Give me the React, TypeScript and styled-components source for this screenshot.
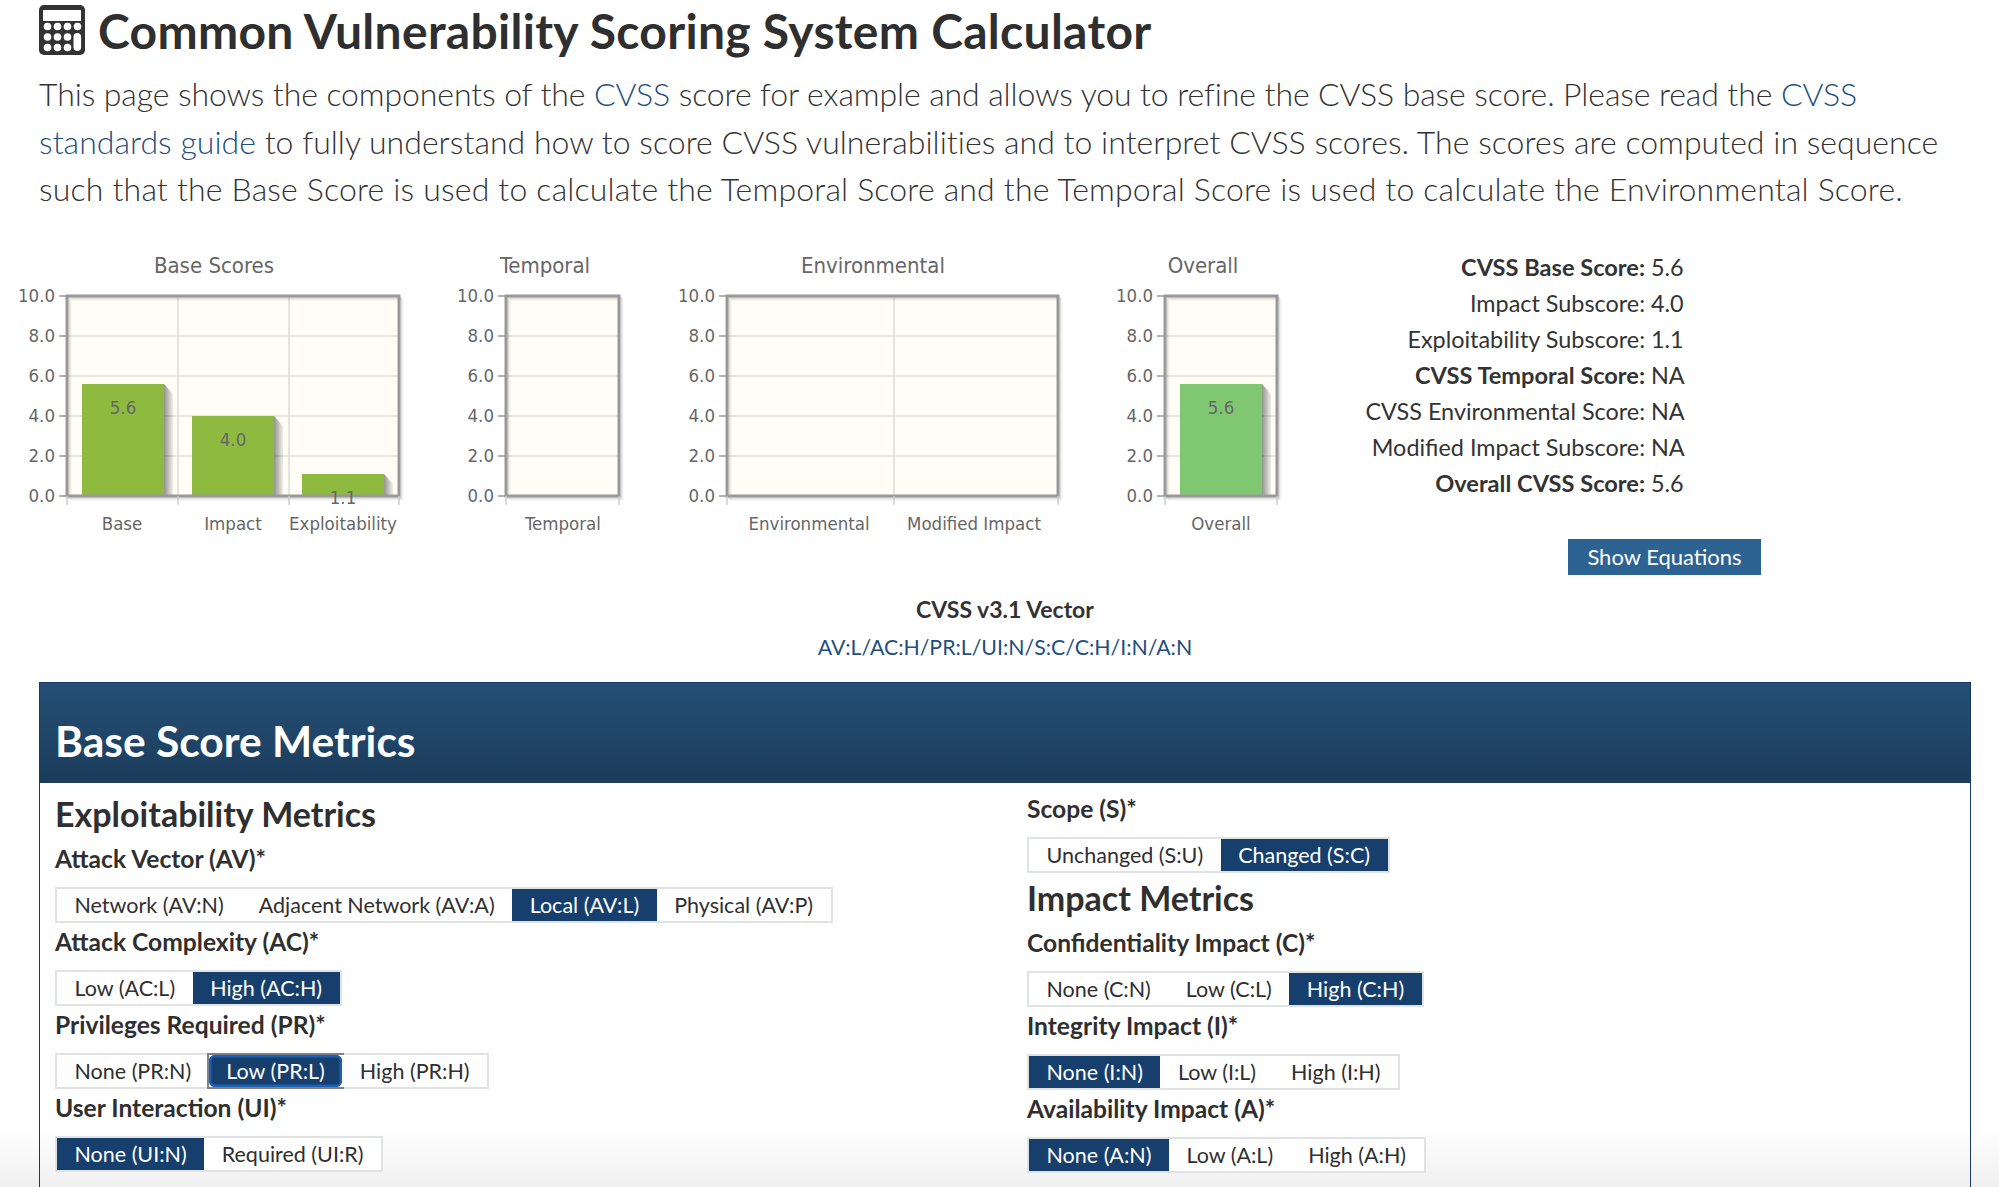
import React from "react"
import styled, { createGlobalStyle } from "styled-components"

const GlobalStyle = createGlobalStyle`
  html, body {
    margin: 0;
    padding: 0;
    height: 1187px;
    overflow: hidden;
    background: #fff;
  }
  body {
    font-family: "Lato", "Liberation Sans", sans-serif;
    color: #333;
  }
`

const Page = styled.div`
  position: relative;
  height: 1187px;
  overflow: hidden;
  background: linear-gradient(to bottom, #fff 1128px, #f0f0f0 1187px);
`

const Intro = styled.header`
  padding: 0 39px;
`

const TitleRow = styled.h1`
  display: flex;
  align-items: center;
  gap: 13px;
  margin: 0;
  height: 60px;
  font-size: 48px;
  font-weight: 700;
  letter-spacing: 0.3px;
  color: #2f2f2f;
  white-space: nowrap;
`

const Lead = styled.p`
  margin: 10px 0 0;
  font-size: 32px;
  line-height: 47.5px;
  font-weight: 300;
  color: #333;
  white-space: nowrap;
`

const LeadLine = styled.span<{ $spacing: number }>`
  display: block;
  letter-spacing: ${p => p.$spacing}px;
`

const Link = styled.a`
  color: #1f4f7f;
  text-decoration: none;
`

const Summary = styled.section`
  display: flex;
  margin-top: 34px;
`

const Charts = styled.div`
  display: flex;
  gap: 20px;
`

const ChartSvg = styled.svg`
  display: block;
  height: 310px;
  font-family: "DejaVu Sans Condensed", "DejaVu Sans", sans-serif;
`

const ScoreColumn = styled.div`
  margin: 2px 0 0 50px;
  width: 464px;
`

const ScoreGrid = styled.dl`
  display: grid;
  grid-template-columns: 298px auto;
  column-gap: 6px;
  margin: 0;
  font-size: 23.4px;
  line-height: 36px;
`

const ScoreName = styled.dt<{ $strong?: boolean }>`
  text-align: right;
  font-weight: ${p => (p.$strong ? 700 : 400)};
  font-size: ${p => (p.$strong ? "23.6px" : "23.4px")};
`

const ScoreValue = styled.dd`
  margin: 0;
`

const EquationsButton = styled.button`
  display: block;
  margin: 38px 0 0 221px;
  width: 193px;
  height: 36px;
  padding: 0;
  border: 0;
  background: #2d6393;
  color: #fff;
  font: 400 22px "Lato", sans-serif;
`

const Vector = styled.div`
  margin-top: 16px;
  padding-left: 11px;
  text-align: center;
  font-size: 23px;
  line-height: 37px;
`

const VectorTitle = styled.div`
  font-weight: 700;
`

const VectorLink = styled(Link)`
  font-size: 21.3px;
`

const Panel = styled.section`
  margin: 16px 28px 0 39px;
  border: 1.5px solid #16386b;
  border-bottom: 0;
  height: 600px;
`

const PanelHeader = styled.h2`
  display: flex;
  align-items: center;
  height: 100px;
  margin: 0;
  padding: 16px 15px 0;
  box-sizing: border-box;
  background: linear-gradient(to bottom, #254f76, #1b3c5b);
  color: #fff;
  font-size: 42.5px;
  font-weight: 700;
`

const PanelBody = styled.div`
  display: grid;
  grid-template-columns: 972px 1fr;
  padding: 0 15px;
`

const MetricColumn = styled.div<{ $offset?: number }>`
  display: flex;
  flex-direction: column;
  padding-top: ${p => p.$offset ?? 0}px;
`

const GroupTitle = styled.h3<{ $first?: boolean }>`
  margin: ${p => (p.$first ? "0" : "7px 0 0")};
  height: ${p => (p.$first ? "53px" : "44px")};
  line-height: ${p => (p.$first ? "62px" : "44px")};
  font-size: 34px;
  font-weight: 700;
  color: #2f2f2f;
`

const Metric = styled.div`
  height: 83px;
`

const MetricLabel = styled.div`
  height: 51px;
  line-height: 46px;
  font-size: 24.6px;
  font-weight: 700;
  color: #2f2f2f;
`

const Segments = styled.div`
  display: inline-flex;
  height: 36px;
  box-sizing: border-box;
  border: 2px solid #e0e3e3;
  background: #fff;
`

const Segment = styled.span<{ $on?: boolean; $focus?: boolean }>`
  position: relative;
  display: flex;
  align-items: center;
  padding: 0 17.5px;
  font-size: 21.5px;
  white-space: nowrap;
  color: ${p => (p.$on ? "#fff" : "#2f2f2f")};
  background: ${p => (p.$on ? "#173f6d" : "#fff")};
  & + & {
    border-left: ${p => (p.$on ? "0" : "1px solid #d9dddd")};
  }
  ${p =>
    p.$focus &&
    `
    border-radius: 6px;
    box-shadow: inset 0 0 0 2.5px #1a62b5;
    &::after {
      content: "";
      position: absolute;
      inset: -2px;
      border: 2px solid #7d8186;
    }
  `}
`

const CalculatorIcon = () => (
  <svg width="46" height="50" viewBox="0 0 46 50" aria-hidden="true">
    <rect width="46" height="50" rx="5" fill="#333" />
    <rect x="4" y="5" width="38" height="11" fill="#fff" />
    {[0, 1, 2].flatMap(row =>
      [0, 1, 2, 3]
        .filter(col => !(col === 3 && row > 0))
        .map(col => (
          <circle key={`${row}-${col}`} cx={8.5 + col * 10} cy={21.5 + row * 10.5} r="3.8" fill="#fff" />
        )),
    )}
    <rect x="34.5" y="28" width="7.6" height="18" rx="3.8" fill="#fff" />
  </svg>
)

type Bar = { label: string; value?: number; labelX: number }

type ChartProps = {
  title: string
  titleX: number
  width: number
  plot: number
  bars: Bar[]
  barColor?: string
  barLeft?: number
  divisions?: number[]
}

const PLOT_TOP = 49
const PLOT_BOTTOM = 249
const PLOT_LEFT = 67

const Chart = ({ title, titleX, width, plot, bars, barColor = "#8dba3f", barLeft = 15, divisions = [] }: ChartProps) => {
  const right = PLOT_LEFT + plot
  const ticks = [10, 8, 6, 4, 2, 0]
  const toY = (v: number) => PLOT_BOTTOM - v * 20
  const xTicks = [PLOT_LEFT, ...divisions.map(d => PLOT_LEFT + d), right]
  const shadowId = `bar-shadow-${title.replace(/\s/g, "")}`
  return (
    <ChartSvg width={width} viewBox={`0 0 ${width} 310`} role="img" aria-label={title}>
      <defs>
        <linearGradient id={shadowId}>
          <stop offset="0" stopColor="#000" stopOpacity=".42" />
          <stop offset="1" stopColor="#000" stopOpacity=".06" />
        </linearGradient>
      </defs>
      <text x={titleX} y={26} fontSize="22" fill="#666" textAnchor="middle">{title}</text>
      <rect x={PLOT_LEFT} y={PLOT_TOP} width={plot} height={200} fill="#fffdf6" />
      {ticks.slice(1, 5).map(t => (
        <line key={t} x1={PLOT_LEFT} x2={right} y1={toY(t)} y2={toY(t)} stroke="#e1e0da" strokeWidth="1.5" />
      ))}
      {divisions.map(d => (
        <line key={d} x1={PLOT_LEFT + d} x2={PLOT_LEFT + d} y1={PLOT_TOP} y2={PLOT_BOTTOM} stroke="#dcdcd8" strokeWidth="1.5" />
      ))}
      <g fill="none" stroke="#000">
        <rect x={PLOT_LEFT + 2} y={PLOT_TOP + 2} width={plot} height={200} strokeOpacity=".1" strokeWidth="2" />
        <rect x={PLOT_LEFT + 3.5} y={PLOT_TOP + 3.5} width={plot} height={200} strokeOpacity=".06" strokeWidth="2" />
      </g>
      {bars.map((b, i) => {
        if (b.value === undefined) return null
        const left = PLOT_LEFT + barLeft + i * 110
        const top = toY(b.value)
        return (
          <g key={b.label}>
            <polygon
              points={`${left + 82},${top} ${left + 91},${top + 10} ${left + 91},${PLOT_BOTTOM} ${left + 82},${PLOT_BOTTOM}`}
              fill={`url(#${shadowId})`}
            />
            <rect x={left} y={top} width={82} height={b.value * 20} fill={barColor} />
          </g>
        )
      })}
      <rect x={PLOT_LEFT} y={PLOT_TOP} width={plot} height={200} fill="none" stroke="#999" strokeWidth="3" />
      {ticks.map(t => (
        <g key={t}>
          <line x1={PLOT_LEFT - 8} x2={PLOT_LEFT} y1={toY(t)} y2={toY(t)} stroke="#999" strokeWidth="1.5" />
          <text x={PLOT_LEFT - 12} y={toY(t) + 6} fontSize="18.5" fill="#666" textAnchor="end">{t.toFixed(1)}</text>
        </g>
      ))}
      {xTicks.map(x => (
        <line key={x} x1={x} x2={x} y1={PLOT_BOTTOM} y2={PLOT_BOTTOM + 9} stroke="#ccc" strokeWidth="1.5" />
      ))}
      {bars.map((b, i) => (
        <g key={b.label}>
          <text x={b.labelX} y={283} fontSize="18.5" fill="#666" textAnchor="middle">{b.label}</text>
          {b.value !== undefined && (
            <text x={PLOT_LEFT + barLeft + i * 110 + 41} y={toY(b.value) + 30} fontSize="18.5" fill="#666" textAnchor="middle">{b.value.toFixed(1)}</text>
          )}
        </g>
      ))}
    </ChartSvg>
  )
}

const scores = [
  { name: "CVSS Base Score:", value: "5.6", strong: true },
  { name: "Impact Subscore:", value: "4.0" },
  { name: "Exploitability Subscore:", value: "1.1" },
  { name: "CVSS Temporal Score:", value: "NA", strong: true },
  { name: "CVSS Environmental Score:", value: "NA" },
  { name: "Modified Impact Subscore:", value: "NA" },
  { name: "Overall CVSS Score:", value: "5.6", strong: true },
]

type MetricRowProps = { label: string; options: string[]; active: number; focus?: boolean }

const MetricRow = ({ label, options, active, focus }: MetricRowProps) => (
  <Metric>
    <MetricLabel>{label}</MetricLabel>
    <Segments>
      {options.map((o, i) => (
        <Segment key={o} $on={i === active} $focus={focus && i === active}>{o}</Segment>
      ))}
    </Segments>
  </Metric>
)

const App = () => (
  <Page>
    <GlobalStyle />
    <Intro>
      <TitleRow>
        <CalculatorIcon />
        Common Vulnerability Scoring System Calculator
      </TitleRow>
      <Lead>
        <LeadLine $spacing={-0.1}>
          This page shows the components of the <Link href="#">CVSS</Link> score for example and allows you to refine the CVSS base score. Please read the <Link href="#">CVSS</Link>
        </LeadLine>
        <LeadLine $spacing={0.03}>
          <Link href="#">standards guide</Link> to fully understand how to score CVSS vulnerabilities and to interpret CVSS scores. The scores are computed in sequence
        </LeadLine>
        <LeadLine $spacing={0.18}>
          such that the Base Score is used to calculate the Temporal Score and the Temporal Score is used to calculate the Environmental Score.
        </LeadLine>
      </Lead>
    </Intro>
    <Summary>
      <Charts>
        <Chart
          title="Base Scores"
          titleX={214}
          width={419}
          plot={332}
          divisions={[111, 222]}
          bars={[
            { label: "Base", value: 5.6, labelX: 122 },
            { label: "Impact", value: 4, labelX: 233 },
            { label: "Exploitability", value: 1.1, labelX: 343 },
          ]}
        />
        <Chart title="Temporal" titleX={106} width={201} plot={113} bars={[{ label: "Temporal", labelX: 124 }]} />
        <Chart
          title="Environmental"
          titleX={213}
          width={418}
          plot={331}
          divisions={[167]}
          bars={[
            { label: "Environmental", labelX: 149 },
            { label: "Modified Impact", labelX: 314 },
          ]}
        />
        <Chart
          title="Overall"
          titleX={105}
          width={199}
          plot={112}
          barColor="#80c772"
          bars={[{ label: "Overall", value: 5.6, labelX: 123 }]}
        />
      </Charts>
      <ScoreColumn>
        <ScoreGrid>
          {scores.map(s => (
            <React.Fragment key={s.name}>
              <ScoreName $strong={s.strong}>{s.name}</ScoreName>
              <ScoreValue>{s.value}</ScoreValue>
            </React.Fragment>
          ))}
        </ScoreGrid>
        <EquationsButton>Show Equations</EquationsButton>
      </ScoreColumn>
    </Summary>
    <Vector>
      <VectorTitle>CVSS v3.1 Vector</VectorTitle>
      <VectorLink href="#">AV:L/AC:H/PR:L/UI:N/S:C/C:H/I:N/A:N</VectorLink>
    </Vector>
    <Panel>
      <PanelHeader>Base Score Metrics</PanelHeader>
      <PanelBody>
        <MetricColumn>
          <GroupTitle $first>Exploitability Metrics</GroupTitle>
          <MetricRow label="Attack Vector (AV)*" options={["Network (AV:N)", "Adjacent Network (AV:A)", "Local (AV:L)", "Physical (AV:P)"]} active={2} />
          <MetricRow label="Attack Complexity (AC)*" options={["Low (AC:L)", "High (AC:H)"]} active={1} />
          <MetricRow label="Privileges Required (PR)*" options={["None (PR:N)", "Low (PR:L)", "High (PR:H)"]} active={1} focus />
          <MetricRow label="User Interaction (UI)*" options={["None (UI:N)", "Required (UI:R)"]} active={0} />
        </MetricColumn>
        <MetricColumn $offset={3}>
          <MetricRow label="Scope (S)*" options={["Unchanged (S:U)", "Changed (S:C)"]} active={1} />
          <GroupTitle>Impact Metrics</GroupTitle>
          <MetricRow label="Confidentiality Impact (C)*" options={["None (C:N)", "Low (C:L)", "High (C:H)"]} active={2} />
          <MetricRow label="Integrity Impact (I)*" options={["None (I:N)", "Low (I:L)", "High (I:H)"]} active={0} />
          <MetricRow label="Availability Impact (A)*" options={["None (A:N)", "Low (A:L)", "High (A:H)"]} active={0} />
        </MetricColumn>
      </PanelBody>
    </Panel>
  </Page>
)

export default App
